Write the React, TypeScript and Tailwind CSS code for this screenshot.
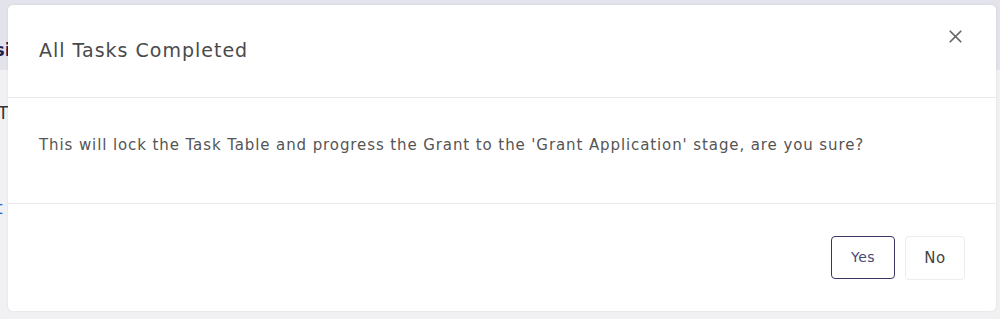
import { X } from 'lucide-react';

export default function App() {
    return (
        <div className="relative w-[1000px] h-[319px] overflow-hidden bg-[#ededf0] font-['DejaVu_Sans',sans-serif]">
            {/* Page behind the backdrop */}
            <div className="flex flex-col w-full h-full">
                <div className="h-[70px] bg-[#e3e3ec] flex items-center">
                    <span className="-ml-[6px] mt-[28px] text-[18px] font-bold text-[#1d1f52]">si</span>
                </div>
                <div className="flex-1 bg-[#f1f1f4] relative">
                    <span className="absolute left-[-2px] top-[31px] text-[17px] text-[#333]">T</span>
                    <span className="absolute left-[-4px] top-[126px] text-[17px] text-[#2c62c9]">t</span>
                </div>
            </div>

            {/* Modal */}
            <div className="absolute left-[8px] top-[5px] w-[988px] h-[306px] bg-white rounded-[5px] shadow-[0_0_3px_rgba(0,0,0,0.08)] flex flex-col">
                {/* Header */}
                <div className="h-[93px] flex items-start justify-between border-b border-[#e9e9ef] pl-[31px] pr-[30px]">
                    <h2 className="mt-[33px] text-[19px] leading-[24px] text-[#4a4a4a] tracking-[1px]">All Tasks Completed</h2>
                    <button className="mt-[21px] text-[#666]">
                        <X className="w-[21px] h-[21px]" strokeWidth={2} />
                    </button>
                </div>

                {/* Body */}
                <div className="h-[106px] flex items-center border-b border-[#e9e9ef] pl-[31px]">
                    <p className="text-[15px] leading-[20px] text-[#555] tracking-[0.9px] -mt-[12px]">
                        This will lock the Task Table and progress the Grant to the 'Grant Application' stage, are you sure?
                    </p>
                </div>

                {/* Footer */}
                <div className="flex-1 flex items-start justify-end gap-[10px] pr-[31px] pt-[32px]">
                    <button className="w-[64px] h-[43px] rounded-[4px] border border-[#3a3563] text-[14px] text-[#4b4775] tracking-[0.5px]">
                        Yes
                    </button>
                    <button className="w-[60px] h-[44px] rounded-[4px] border border-[#ececf0] text-[15px] text-[#444] tracking-[0.5px]">
                        No
                    </button>
                </div>
            </div>
        </div>
    );
}
